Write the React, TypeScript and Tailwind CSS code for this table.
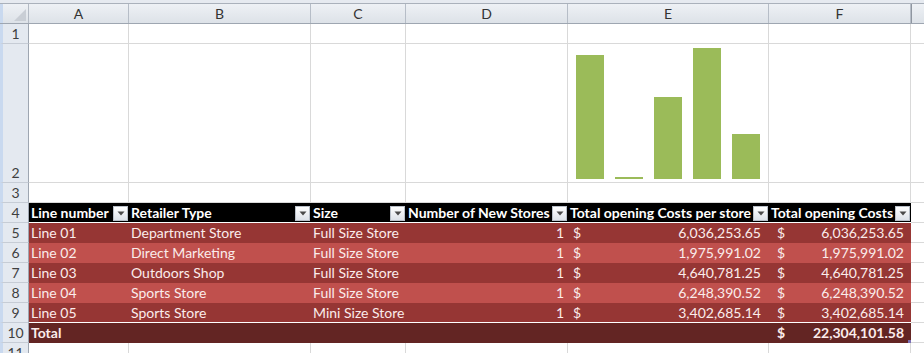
import React from "react";

const W = ["w-[100px]", "w-[182px]", "w-[95px]", "w-[162px]", "w-[201px]", "w-[142px]"];
const LETTERS = ["A", "B", "C", "D", "E", "F"];

function RowHead({ n, h }: { n?: string; h: string }) {
  return (
    <div
      className={`${h} w-[29px] shrink-0 border-l-[3px] border-l-[#c9d9ef] border-r border-r-[#9ea6b1] border-b border-b-[#c6ccd5] bg-[#e4e9f0] flex items-end justify-center text-[14px] leading-[19px] text-[#3f3f3f]`}
    >
      {n}
    </div>
  );
}

function EmptyRow({ n, h }: { n: string; h: string }) {
  return (
    <div className="flex">
      <RowHead n={n} h={h} />
      {W.map((w, i) => (
        <div key={i} className={`${w} ${h} shrink-0 border-r border-b border-[#d9d9d9]`} />
      ))}
      <div className={`flex-1 ${h} border-b border-[#d9d9d9]`} />
    </div>
  );
}

function Filter() {
  return (
    <div className="w-[15px] h-[15px] shrink-0 mr-[1px] self-end mb-[1px] bg-gradient-to-b from-[#ffffff] to-[#dde2e9] border border-[#b9c0c9] flex items-center justify-center">
      <svg width="8" height="5" viewBox="0 0 8 5">
        <path d="M0.5 0.5 L7.5 0.5 L4 4.5 Z" fill="#4a4a4a" />
      </svg>
    </div>
  );
}

const rows = [
  ["Line 01", "Department Store", "Full Size Store", "6,036,253.65"],
  ["Line 02", "Direct Marketing", "Full Size Store", "1,975,991.02"],
  ["Line 03", "Outdoors Shop", "Full Size Store", "4,640,781.25"],
  ["Line 04", "Sports Store", "Full Size Store", "6,248,390.52"],
  ["Line 05", "Sports Store", "Mini Size Store", "3,402,685.14"],
];

function Chart() {
  const bars = [124, 2, 82, 131, 45];
  return (
    <svg width="200" height="138" viewBox="0 0 200 138" className="block">
      {bars.map((b, i) => (
        <rect key={i} x={8 + i * 39} y={135 - b} width={28} height={b} fill="#9bbb59" />
      ))}
    </svg>
  );
}

export default function App() {
  const headers = [
    "Line number",
    "Retailer Type",
    "Size",
    "Number of New Stores",
    "Total opening Costs per store",
    "Total opening Costs",
  ];
  return (
    <div
      className="w-[924px] h-[353px] overflow-hidden bg-white"
      style={{ fontFamily: "Lato, 'Open Sans', sans-serif" }}
    >
      {/* top strip */}
      <div className="h-[4px] bg-[#e6eaf0] border-b border-[#aab1bb]" />
      {/* column header */}
      <div className="flex h-[20px] bg-gradient-to-b from-[#eef1f5] to-[#dde2e8] border-b border-[#9ea6b1]">
        <div className="w-[29px] shrink-0 border-l-[3px] border-l-[#c9d9ef] border-r border-r-[#b3bac4] relative">
          <svg width="12" height="12" viewBox="0 0 12 12" className="absolute right-[2px] bottom-[2px]">
            <path d="M12 0 L12 12 L0 12 Z" fill="#c9ced5" />
          </svg>
        </div>
        {W.map((w, i) => (
          <div
            key={i}
            className={`${w} shrink-0 border-r border-[#b6bdc7] flex items-center justify-center text-[14px] text-[#333333]`}
          >
            {LETTERS[i]}
          </div>
        ))}
        <div className="flex-1 border-l border-[#8f96a0]" />
      </div>

      <EmptyRow n="1" h="h-[20px]" />
      {/* row 2 with chart */}
      <div className="flex">
        <RowHead n="2" h="h-[139px]" />
        {W.map((w, i) => (
          <div
            key={i}
            className={`${w} h-[139px] shrink-0 border-r border-b border-[#d9d9d9] ${i === 4 ? "flex items-end" : ""}`}
          >
            {i === 4 && <Chart />}
          </div>
        ))}
        <div className="flex-1 h-[139px] border-b border-[#d9d9d9]" />
      </div>
      <EmptyRow n="3" h="h-[20px]" />

      {/* table header */}
      <div className="flex">
        <RowHead n="4" h="h-[20px]" />
        <div className="flex w-[882px] h-[20px] bg-black border-b border-white">
          {headers.map((t, i) => (
            <div
              key={i}
              className={`${W[i]} shrink-0 flex items-end justify-between pl-[2px] text-[14px] leading-[19px] font-bold text-white whitespace-nowrap overflow-hidden`}
            >
              <span>{t}</span>
              <Filter />
            </div>
          ))}
        </div>
        <div className="flex-1 h-[20px] border-b border-[#d9d9d9]" />
      </div>

      {rows.map((r, idx) => (
        <div className="flex" key={idx}>
          <RowHead n={String(idx + 5)} h="h-[20px]" />
          <div
            className={`flex w-[882px] h-[20px] text-[14px] leading-[20px] text-[#fbeceb] ${
              idx % 2 === 0 ? "bg-[#963634]" : "bg-[#c0504d]"
            } ${idx === 4 ? "border-b border-white" : ""}`}
          >
            <div className={`${W[0]} shrink-0 pl-[2px]`}>{r[0]}</div>
            <div className={`${W[1]} shrink-0 pl-[2px]`}>{r[1]}</div>
            <div className={`${W[2]} shrink-0 pl-[2px]`}>{r[2]}</div>
            <div className={`${W[3]} shrink-0 pr-[4px] text-right`}>1</div>
            <div className={`${W[4]} shrink-0 flex justify-between pl-[5px] pr-[8px]`}>
              <span>$</span>
              <span>{r[3]}</span>
            </div>
            <div className={`${W[5]} shrink-0 flex justify-between pl-[8px] pr-[7px]`}>
              <span>$</span>
              <span>{r[3]}</span>
            </div>
          </div>
          <div className="flex-1 h-[20px] border-b border-[#d9d9d9]" />
        </div>
      ))}

      {/* total */}
      <div className="flex">
        <RowHead n="10" h="h-[20px]" />
        <div className="flex w-[882px] h-[20px] text-[14px] leading-[20px] font-bold text-[#fbeceb] bg-[#632523] relative">
          <div className={`${W[0]} shrink-0 pl-[2px]`}>Total</div>
          <div className={`${W[1]} shrink-0`} />
          <div className={`${W[2]} shrink-0`} />
          <div className={`${W[3]} shrink-0`} />
          <div className={`${W[4]} shrink-0`} />
          <div className={`${W[5]} shrink-0 flex justify-between pl-[8px] pr-[7px]`}>
            <span>$</span>
            <span>22,304,101.58</span>
          </div>
          <div className="absolute right-0 bottom-0 w-[3px] h-[3px] bg-[#7b6fb5]" />
        </div>
        <div className="flex-1 h-[20px] border-b border-[#d9d9d9]" />
      </div>
      <EmptyRow n="11" h="h-[20px]" />
    </div>
  );
}
